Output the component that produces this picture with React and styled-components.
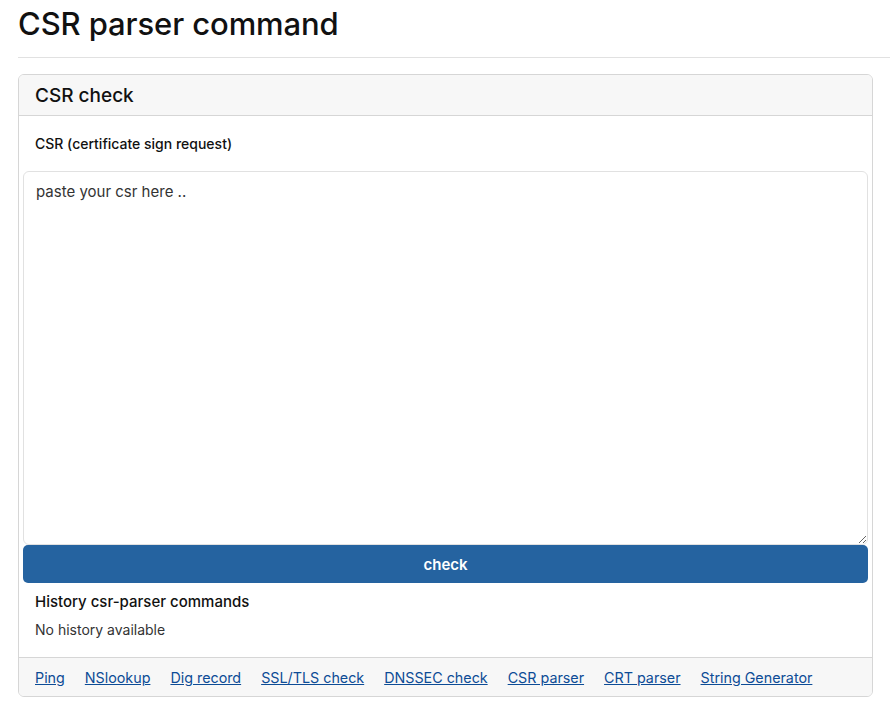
import React from "react";
import styled, { createGlobalStyle } from "styled-components";

const GlobalStyle = createGlobalStyle`
	body {
		margin: 0;
		font-family: Inter, "Liberation Sans", sans-serif;
		color: #111;
		background: #fff;
	}
`;

const Page = styled.div`
	padding: 0 0 0 18px;
`;

const Title = styled.h1`
	margin: 0;
	padding-top: 5px;
	font-size: 31px;
	font-weight: 500;
	letter-spacing: -0.1px;
	line-height: 38px;
`;

const Rule = styled.hr`
	margin: 14px 0 16px;
	border: 0;
	border-top: 1px solid #e1e1e1;
`;

const Card = styled.div`
	width: 853px;
	border: 1px solid #d6d6d6;
	border-radius: 6px;
	overflow: hidden;
`;

const CardHeader = styled.div`
	background: #f7f7f7;
	border-bottom: 1px solid #d6d6d6;
	height: 40px;
	display: flex;
	align-items: center;
	padding: 0 16px;
	font-size: 19px;
	font-weight: 500;
`;

const CardBody = styled.div`
	padding: 19px 4px 19px;
	display: flex;
	flex-direction: column;
`;

const Label = styled.label`
	font-size: 14px;
	font-weight: 500;
	padding-left: 12px;
	margin-bottom: 19px;
`;

const Area = styled.textarea`
	box-sizing: border-box;
	width: 100%;
	height: 374px;
	border: 1px solid #e1e1e1;
	border-radius: 6px;
	padding: 10px 12px;
	font-family: inherit;
	font-size: 15px;
	color: #222;
	resize: vertical;
	outline: none;
	display: block;
	&::placeholder {
		color: #333;
	}
`;

const CheckButton = styled.button`
	height: 38px;
	border: 0;
	border-radius: 5px;
	background: #2563a0;
	color: #fff;
	font-family: inherit;
	font-size: 15px;
	font-weight: 600;
`;

const HistoryTitle = styled.div`
	font-size: 15px;
	font-weight: 500;
	padding-left: 12px;
	margin-top: 9px;
`;

const HistoryNote = styled.div`
	font-size: 14px;
	color: #333;
	padding-left: 12px;
	margin-top: 10px;
`;

const Footer = styled.div`
	background: #f7f7f7;
	border-top: 1px solid #d6d6d6;
	height: 38px;
	display: flex;
	align-items: center;
	gap: 20px;
	padding: 0 16px;
`;

const FooterLink = styled.a`
	color: #0d4c96;
	font-size: 14.3px;
	text-decoration: underline;
	cursor: pointer;
`;

const links = [
	"Ping",
	"NSlookup",
	"Dig record",
	"SSL/TLS check",
	"DNSSEC check",
	"CSR parser",
	"CRT parser",
	"String Generator",
];

const App = () => {
	return (
		<Page>
			<GlobalStyle />
			<Title>CSR parser command</Title>
			<Rule />
			<Card>
				<CardHeader>CSR check</CardHeader>
				<CardBody>
					<Label>CSR (certificate sign request)</Label>
					<Area placeholder="paste your csr here .." />
					<CheckButton>check</CheckButton>
					<HistoryTitle>History csr-parser commands</HistoryTitle>
					<HistoryNote>No history available</HistoryNote>
				</CardBody>
				<Footer>
					{links.map((l) => (
						<FooterLink key={l}>{l}</FooterLink>
					))}
				</Footer>
			</Card>
		</Page>
	);
};

export default App;
